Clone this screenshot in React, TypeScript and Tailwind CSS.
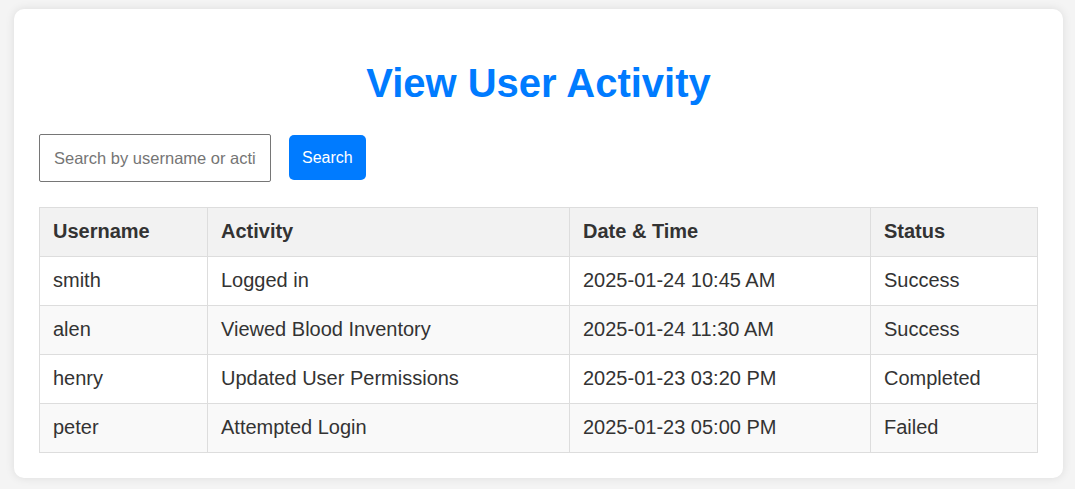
import React from "react";

const rows = [
  ["smith", "Logged in", "2025-01-24 10:45 AM", "Success"],
  ["alen", "Viewed Blood Inventory", "2025-01-24 11:30 AM", "Success"],
  ["henry", "Updated User Permissions", "2025-01-23 03:20 PM", "Completed"],
  ["peter", "Attempted Login", "2025-01-23 05:00 PM", "Failed"],
];

export default function App() {
  return (
    <div
      className="min-h-[489px] bg-[#f4f4f4] pt-[9px] pl-[14px] pr-[12px] pb-[12px]"
      style={{ fontFamily: '"Liberation Sans", Arial, sans-serif' }}
    >
      <div className="bg-white rounded-[10px] shadow-[0_0_10px_rgba(0,0,0,0.1)] p-[25px]">
        <h1 className="text-[40px] leading-[46px] font-bold text-[#007bff] text-center mt-[26px] mb-[28px]">
          View User Activity
        </h1>
        <div className="flex items-start gap-[18px]">
          <input
            type="text"
            placeholder="Search by username or activity"
            className="w-[232px] h-[48px] border border-[#767676] rounded-[2px] pl-[14px] pr-[14px] text-[16.5px] text-[#333] placeholder:text-[#757575] outline-none"
          />
          <button className="mt-[1px] h-[45px] px-[13px] bg-[#007bff] text-white text-[16px] rounded-[5px]">
            Search
          </button>
        </div>
        <table className="w-full border-collapse mt-[25px] text-[20px] leading-[23px] text-[#333]">
          <thead>
            <tr className="bg-[#f2f2f2]">
              <th className="w-[168px] border border-[#ddd] px-[13px] pt-[12px] pb-[13px] text-left font-bold">Username</th>
              <th className="w-[362px] border border-[#ddd] px-[13px] pt-[12px] pb-[13px] text-left font-bold">Activity</th>
              <th className="w-[301px] border border-[#ddd] px-[13px] pt-[12px] pb-[13px] text-left font-bold">Date &amp; Time</th>
              <th className="border border-[#ddd] px-[13px] pt-[12px] pb-[13px] text-left font-bold">Status</th>
            </tr>
          </thead>
          <tbody>
            {rows.map((r, i) => (
              <tr key={i} className={i % 2 === 1 ? "bg-[#f9f9f9]" : "bg-white"}>
                {r.map((c, j) => (
                  <td key={j} className="border border-[#ddd] px-[13px] pt-[12px] pb-[13px] text-left">
                    {c}
                  </td>
                ))}
              </tr>
            ))}
          </tbody>
        </table>
      </div>
    </div>
  );
}
